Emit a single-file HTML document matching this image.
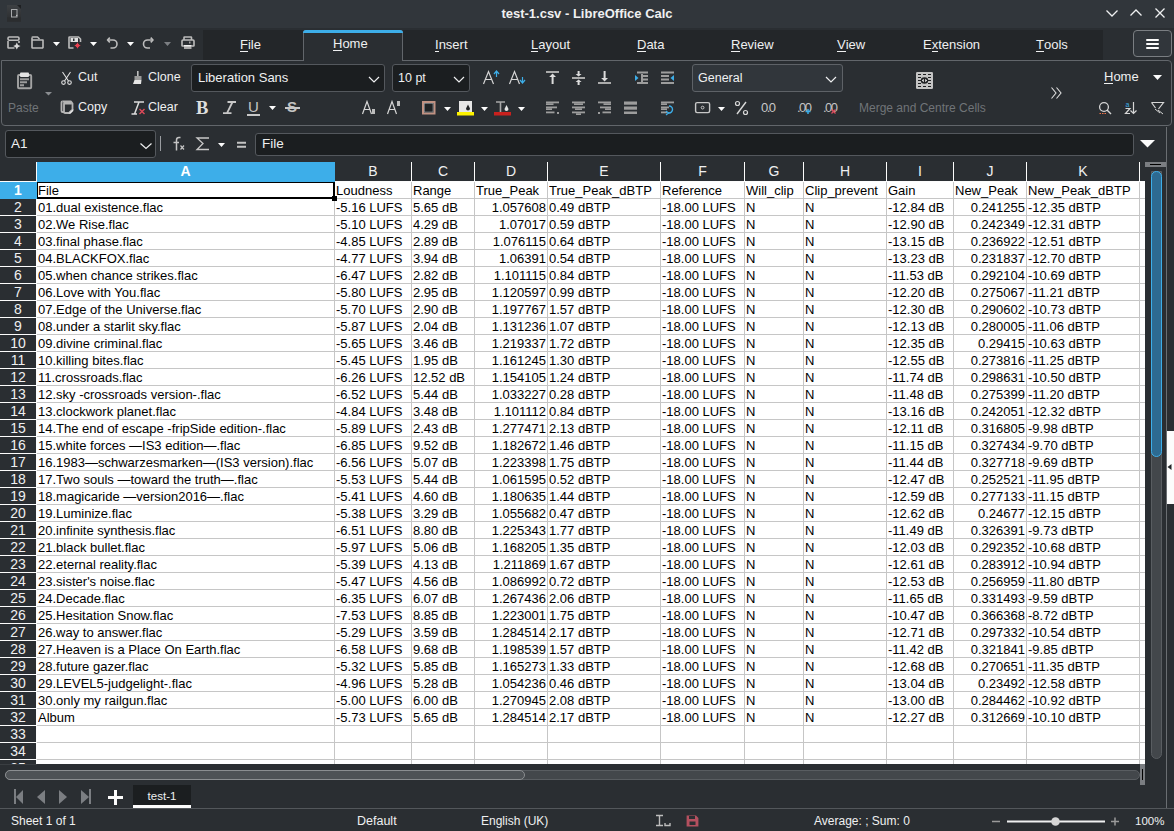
<!DOCTYPE html>
<html><head><meta charset="utf-8">
<style>
*{margin:0;padding:0;box-sizing:border-box}
html,body{width:1174px;height:831px;overflow:hidden;background:#2a2e32;font-family:"Liberation Sans",sans-serif;color:#eff0f1}
.abs{position:absolute}
svg{position:absolute;overflow:visible}
.t{position:absolute;white-space:nowrap;font-size:13px;line-height:16px}
.u{border-bottom:1px solid currentColor;display:inline-block;line-height:13px}
#title{left:0;top:0;width:1174px;height:28px;background:#31363b}
#tbrow{left:0;top:28px;width:1174px;height:33px;background:#2a2e32}
#tabsbg{left:203px;top:30px;width:900px;height:30px;background:#232629}
.tab{position:absolute;top:37px;font-size:13px;line-height:16px;color:#eff0f1;white-space:nowrap}
#panel{left:1px;top:60px;width:1171px;height:66px;border:1px solid #62666b;border-radius:0 4px 4px 4px;background:#2a2e32}
.combo{position:absolute;background:#1b1e20;border:1px solid #54585d;border-radius:3px}
.cells{position:absolute;background:#fff}
.ch{position:absolute;top:162px;height:19px;text-align:center;font-size:14px;line-height:19px}
.rh{position:absolute;left:0;width:36px;height:17px;text-align:center;font-size:14px;line-height:17px}
.hl{position:absolute;height:1px;background:#c6c6c6}
.vl{position:absolute;width:1px;background:#c6c6c6}
.c{position:absolute;height:16px;font-size:13px;line-height:17px;color:#000;white-space:nowrap;overflow:hidden}
.c.r{text-align:right}
</style></head><body>
<div id="title" class="abs"></div>
<!-- app icon -->
<svg style="left:0;top:0" width="30" height="28">
<defs><linearGradient id="ag" x1="0" y1="0" x2="0" y2="1"><stop offset="0" stop-color="#3d4043"/><stop offset="1" stop-color="#2a2c2e"/></linearGradient></defs>
<path d="M7 5 H21 V21.5 H7 Z" fill="url(#ag)"/>
<path d="M17 5 H21 V9 Z" fill="#1e2022"/>
<rect x="7" y="17.5" width="14" height="4" fill="#2b2d2f"/>
<rect x="11.5" y="9.5" width="5.5" height="7.5" fill="none" stroke="#a8aaac" stroke-width="1"/>
<path d="M15.5 16.5 L17 14.5 L17.5 15.5 Z" fill="#e0e0e0"/>
</svg>
<div class="t" style="left:0;top:6px;width:1174px;text-align:center;font-weight:bold;font-size:13px">test-1.csv - LibreOffice Calc</div>
<svg style="left:0;top:0" width="1174" height="28">
<path d="M1106.5 10.5 L1112 16 L1117.5 10.5" fill="none" stroke="#eff0f1" stroke-width="1.3"/>
<path d="M1130.5 15.5 L1136 10 L1141.5 15.5" fill="none" stroke="#eff0f1" stroke-width="1.3"/>
<path d="M1155.5 8.5 L1164.5 17.5 M1164.5 8.5 L1155.5 17.5" fill="none" stroke="#eff0f1" stroke-width="1.3"/>
</svg>
<div id="tbrow" class="abs"></div>
<div id="tabsbg" class="abs"></div>
<!-- quick toolbar icons -->
<svg style="left:0;top:0" width="210" height="60">
<g fill="none" stroke="#bcbcbc" stroke-width="1.6" stroke-linejoin="round">
<path d="M8 41 V47.5 A1 1 0 0 0 9 48 H14.5 M19 41 V43"/>
<rect x="8" y="37" width="11" height="3.2" rx="1.2"/>
<path d="M32 37.5 V47.5 A1 1 0 0 0 33 48 H42.5 A1 1 0 0 0 43 47.5 V40 H32"/>
<path d="M32 37.5 A1 1 0 0 1 33 37 H37.5 L39.5 39"/>
<path d="M69 37.5 A0.5 0.5 0 0 1 69.5 37 H78.5 L80.5 39 V42 M69 37.5 V48 H73.5"/>
<path d="M108 40 H113 A3.8 3.8 0 0 1 113 48 H110.5"/>
<path d="M109.8 37.6 L107.5 40 L109.8 42.4"/>
<path d="M152.5 40 H147.5 A3.8 3.8 0 0 0 147.5 48 H150"/>
<path d="M150.7 37.6 L153 40 L150.7 42.4"/>
<path d="M184 40 V37.5 A0.5 0.5 0 0 1 184.5 37 H191 A0.5 0.5 0 0 1 191.5 37.5 V40"/>
<path d="M184 46 H182.5 A0.5 0.5 0 0 1 182 45.5 V41 A1 1 0 0 1 183 40 H193 A1 1 0 0 1 194 41 V45.5 A0.5 0.5 0 0 1 193.5 46 H191.5"/>
</g>
<path d="M16.8 42.5 L18 45 L20.5 46 L18 47.2 L16.8 49.5 L15.6 47.2 L13.2 46 L15.6 45 Z" fill="#d8d8d8"/>
<rect x="70.5" y="38" width="7.5" height="4" fill="#e0e0e0"/>
<rect x="73" y="38.5" width="1.5" height="2.5" fill="#2a2e32"/>
<path d="M77.5 42.3 L78.6 44.4 L80.7 45.5 L78.6 46.6 L77.5 48.7 L76.4 46.6 L74.3 45.5 L76.4 44.4 Z" fill="#e8404f"/>
<circle cx="77.5" cy="45.5" r="1.8" fill="#e8404f"/>
<rect x="184" y="45" width="7.5" height="4" fill="#a8a8a8"/>
<rect x="184" y="45" width="7.5" height="1.5" fill="#eeeeee"/>
<rect x="189" y="41.5" width="1.5" height="2" fill="#a0a0a0"/>
<path d="M53 42 H60 L56.5 46 Z M90 42 H97 L93.5 46 Z M127 42 H134 L130.5 46 Z" fill="#fcfcfc"/>
<path d="M164 42 H171 L167.5 46 Z" fill="#7c7f83"/>
</svg>
<div id="panel" class="abs"></div>
<!-- Home tab -->
<div class="abs" style="left:303px;top:30px;width:100px;height:31px;background:#2a2e32;border:1px solid #62666b;border-bottom:none;border-radius:3px 3px 0 0"></div>
<div class="abs" style="left:303px;top:30px;width:100px;height:3px;background:#3daee9;border-radius:3px 3px 0 0"></div>
<div class="tab" style="left:240px"><span class="u">F</span>ile</div>
<div class="tab" style="left:333px;top:36px"><span class="u">H</span>ome</div>
<div class="tab" style="left:435px"><span class="u">I</span>nsert</div>
<div class="tab" style="left:531px"><span class="u">L</span>ayout</div>
<div class="tab" style="left:637px"><span class="u">D</span>ata</div>
<div class="tab" style="left:731px"><span class="u">R</span>eview</div>
<div class="tab" style="left:837px"><span class="u">V</span>iew</div>
<div class="tab" style="left:923px">E<span class="u">x</span>tension</div>
<div class="tab" style="left:1036px"><span class="u">T</span>ools</div>
<div class="abs" style="left:1133px;top:30px;width:39px;height:27px;background:#31363b;border:1px solid #7a7e82;border-radius:4px"></div>
<div class="abs" style="left:1146px;top:39px;width:13px;height:2px;background:#fcfcfc;border-radius:1px"></div>
<div class="abs" style="left:1146px;top:43px;width:13px;height:2px;background:#fcfcfc;border-radius:1px"></div>
<div class="abs" style="left:1146px;top:47px;width:13px;height:2px;background:#fcfcfc;border-radius:1px"></div>
<!-- Paste / Cut / Copy / Clone / Clear -->
<svg style="left:0;top:0" width="1174" height="126">
<rect x="18" y="75" width="13.2" height="13.2" rx="1" fill="none" stroke="#a4a4a4" stroke-width="1.9"/>
<path d="M20 79.3 H29 M20 82.3 H27 M20 85.3 H24" stroke="#9c9c9c" stroke-width="2"/>
<rect x="20" y="72.5" width="9" height="4.6" rx="1" fill="#e4e4e4"/>
<path d="M45 92 H52 L48.5 95.5 Z" fill="#8a8d91"/>
<!-- scissors -->
<g fill="none" stroke="#e0e0e0" stroke-width="1.1">
<path d="M62.5 72 L68.5 81 M70.5 72 L64.5 81"/>
<circle cx="63.5" cy="82.6" r="1.8"/><circle cx="69.5" cy="82.6" r="1.8"/>
</g>
<!-- copy -->
<g fill="none" stroke="#b4b4b4" stroke-width="1.8" stroke-linejoin="round">
<path d="M62.5 101.5 H71 L72.5 103.5 V109.5 L69 113 H65 A1 1 0 0 1 64 112 V103.5 H71.5"/>
<path d="M62.5 101.5 A1 1 0 0 0 61.5 102.5 V111 A1 1 0 0 0 62.5 112 H64"/>
</g>
<path d="M68.5 113.6 L73.3 109 V111 L70.5 113.8 Z" fill="#e8e8e8"/>
<!-- clone brush -->
<rect x="137" y="71" width="1.6" height="5" fill="#bdbdbd"/>
<path d="M134.5 76 H141.5 V80 H134.5 Z" fill="#9a9a9a"/>
<path d="M134.5 80 H141.5 L141 84 H133 Z" fill="#e6e6e6"/>
<!-- clear formatting -->
<path d="M134 102 H144 M139 102 L134.5 114 M131.5 114 H137" fill="none" stroke="#dcdcdc" stroke-width="1.5"/>
<path d="M139.5 109 L144.5 114 M144.5 109 L139.5 114" stroke="#e04a5a" stroke-width="1.4"/>
</svg>
<div class="t" style="left:78px;top:69px;font-size:12.5px">Cut</div>
<div class="t" style="left:78px;top:99px;font-size:12.5px">Copy</div>
<div class="t" style="left:148px;top:69px;font-size:12.5px">Clone</div>
<div class="t" style="left:148px;top:99px;font-size:12.5px">Clear</div>
<div class="t" style="left:8px;top:100px;font-size:12px;color:#707478">Paste</div>
<!-- font name combo -->
<div class="combo" style="left:191px;top:64px;width:194px;height:28px"></div>
<div class="t" style="left:198px;top:70px;font-size:13px">Liberation Sans</div>
<div class="combo" style="left:392px;top:64px;width:78px;height:28px"></div>
<div class="t" style="left:398px;top:70px;font-size:12.5px">10 pt</div>
<div class="combo" style="left:692px;top:64px;width:151px;height:28px;background:#31363b;border-color:#5e6267"></div>
<div class="t" style="left:698px;top:70px;font-size:12.5px">General</div>
<svg style="left:0;top:0" width="1174" height="126">
<g fill="none" stroke="#eff0f1" stroke-width="1.2">
<path d="M369 77 L374 82 L379 77"/>
<path d="M454 77 L459 82 L464 77"/>
<path d="M826 77 L831 82 L836 77"/>
</g>
</svg>
<!-- B I U S -->
<div class="t" style="left:196px;top:98px;font-size:18.5px;font-weight:bold;font-family:'Liberation Serif',serif;color:#dedede;line-height:20px">B</div>
<svg style="left:0;top:0" width="260" height="126"><path d="M227.5 102 H236 M223 113.2 H231.5 M232.5 102 L227 113.2" fill="none" stroke="#c8c8c8" stroke-width="1.8"/></svg>
<div class="t" style="left:248px;top:98px;font-size:15px;color:#c4c4c4;line-height:18px">U</div>
<div class="abs" style="left:247px;top:114px;width:13px;height:1.5px;background:#c8c8c8"></div>
<div class="t" style="left:287px;top:98px;font-size:15px;color:#c4c4c4;line-height:18px;font-weight:bold">S</div>
<div class="abs" style="left:285px;top:107px;width:15px;height:1.5px;background:#c8c8c8"></div>
<svg style="left:0;top:0" width="1174" height="126">
<path d="M269 106 H276 L272.5 110 Z M444 107 H451 L447.5 111 Z M481 107 H488 L484.5 111 Z M518 107 H525 L521.5 111 Z M718 107 H725 L721.5 111 Z" fill="#fcfcfc"/>
<!-- sub/superscript -->
<g fill="none" stroke="#d6d6d6" stroke-width="1.2">
<path d="M362.5 114 L367 101.5 L371.5 114 M364 109.5 H370"/>
<path d="M387.5 114 L392 101.5 L396.5 114 M389 109.5 H395"/>
<!-- grow/shrink -->
<path d="M483.5 84 L488.5 71.5 L493.5 84 M485.5 79.5 H491.5"/>
<path d="M509.5 84 L514.5 71.5 L519.5 84 M511.5 79.5 H517.5"/>
</g>
<rect x="372" y="109" width="3" height="5" fill="#bdbdbd"/>
<rect x="397" y="101" width="3" height="5" fill="#bdbdbd"/>
<path d="M494 74 L496.5 71 L499 74 M496.5 72 V77" fill="none" stroke="#3daee9" stroke-width="1.2"/>
<path d="M520 80 L522.5 83 L525 80 M522.5 83 V77" fill="none" stroke="#3daee9" stroke-width="1.2"/>
<!-- borders -->
<rect x="423" y="102" width="11.5" height="11.5" fill="#1f2224" stroke="#c09283" stroke-width="2"/>
<rect x="424.5" y="103.5" width="8.5" height="8.5" fill="none" stroke="#9aa4aa" stroke-width="0.6"/>
<!-- highlight -->
<rect x="459" y="101" width="13" height="11" fill="#e6e6e6"/>
<path d="M468 104.5 L470 108.5 A2 2 0 0 1 466 108.5 Z" fill="#1f2224"/>
<rect x="457" y="112" width="17" height="3.5" fill="#fdf200"/>
<!-- font color -->
<path d="M496 102 H505 M500.5 102 V112" fill="none" stroke="#a8a8a8" stroke-width="1.6"/>
<path d="M506.5 105 L508.5 109 A2 2 0 0 1 504.5 109 Z" fill="#e6e6e6"/>
<rect x="494" y="112" width="17" height="3.5" fill="#c9211e"/>
<!-- align top/center/bottom -->
<g fill="#dcdcdc">
<rect x="546" y="71" width="13" height="2" fill="#ababab"/>
<rect x="551.6" y="76" width="2" height="8"/>
<path d="M549.2 77 L552.6 73.6 L556 77 Z"/>
<rect x="572" y="77" width="13" height="2" fill="#ababab"/>
<rect x="577.6" y="71" width="2" height="4"/>
<rect x="577.6" y="81" width="2" height="4"/>
<path d="M575.6 74 L578.6 76.6 L581.6 74 Z M575.6 82 L578.6 79.4 L581.6 82 Z"/>
<rect x="598" y="82" width="13" height="2" fill="#ababab"/>
<rect x="603.6" y="71" width="2" height="7.5"/>
<path d="M601.2 78 L604.6 81.4 L608 78 Z"/>
</g>
<!-- indent -->
<g fill="#9d9d9d">
<rect x="637" y="71.5" width="11" height="2"/><rect x="641" y="75" width="7" height="2"/><rect x="641" y="78.5" width="7" height="2"/><rect x="637" y="82" width="11" height="2"/>
<rect x="641" y="74" width="2" height="8"/>
<rect x="661" y="71.5" width="13" height="2"/><rect x="661" y="75" width="8" height="2"/><rect x="661" y="78.5" width="8" height="2"/><rect x="661" y="82" width="13" height="2"/>
</g>
<path d="M635 75 L638.5 78 L635 81 Z" fill="#3daee9"/>
<path d="M674 75 L670.5 78 L674 81 Z" fill="#3daee9"/>
<!-- align left/center/right/justify, wrap -->
<g fill="#9d9d9d">
<rect x="546" y="101.5" width="13" height="1.8"/><rect x="546" y="103.3" width="7.5" height="1.7"/><rect x="546" y="106.5" width="11" height="1.8"/><rect x="546" y="108.3" width="6" height="1.7"/><rect x="546" y="111.5" width="8.5" height="1.8"/><rect x="557" y="112" width="2" height="2"/>
<rect x="572" y="101.5" width="13" height="1.8"/><rect x="574" y="103.3" width="9" height="1.7"/><rect x="572" y="106.5" width="13" height="1.8"/><rect x="575" y="108.3" width="7" height="1.7"/><rect x="572" y="111.5" width="13" height="1.8"/><rect x="576" y="113.3" width="5" height="1.7"/>
<rect x="598" y="101.5" width="13" height="1.8"/><rect x="603.5" y="103.3" width="7.5" height="1.7"/><rect x="600" y="106.5" width="11" height="1.8"/><rect x="605" y="108.3" width="6" height="1.7"/><rect x="602.5" y="111.5" width="8.5" height="1.8"/><rect x="598" y="112" width="2" height="2"/>
<rect x="624" y="101.5" width="13" height="3.2"/><rect x="624" y="106.5" width="13" height="3.2"/><rect x="624" y="111.5" width="13" height="2.5"/>
<rect x="661" y="101.5" width="13" height="1.8"/><rect x="661" y="103.3" width="6" height="1.7"/><rect x="661" y="106.5" width="8" height="1.8"/><rect x="661" y="108.3" width="6" height="1.7"/><rect x="661" y="111.5" width="6" height="1.8"/>
</g>
<path d="M669 106 A3.5 3.5 0 0 1 669 113 H668" fill="none" stroke="#3daee9" stroke-width="1.4"/>
<path d="M666 111 L668.5 113 L666 115" fill="none" stroke="#3daee9" stroke-width="1.2"/>
<!-- currency -->
<rect x="695.6" y="102.6" width="14" height="10" rx="1.5" fill="none" stroke="#c8c8c8" stroke-width="1.4"/>
<circle cx="702.6" cy="107.6" r="1.4" fill="none" stroke="#c8c8c8" stroke-width="1"/>
<!-- percent -->
<path d="M746 102 L737 114" stroke="#d8d8d8" stroke-width="1.4"/>
<circle cx="737.5" cy="103.5" r="2" fill="none" stroke="#d8d8d8" stroke-width="1.2"/>
<circle cx="745.5" cy="112.5" r="2" fill="none" stroke="#d8d8d8" stroke-width="1.2"/>
<!-- merge -->
<rect x="916" y="72" width="17" height="17" rx="1.2" fill="#c4c4c4"/>
<path d="M918 74.5 H921 M923 74.5 H926 M928 74.5 H931 M918 77.5 H921 M928 77.5 H931 M918 80.5 H921 M928 80.5 H931 M918 83.5 H921 M928 83.5 H931 M918 86.5 H921 M923 86.5 H926 M928 86.5 H931" stroke="#1e2022" stroke-width="1.1"/>
<ellipse cx="924.5" cy="80.5" rx="3.7" ry="3.3" fill="#1e2022"/>
<path d="M921.8 80.5 L923.8 78.8 V82.2 Z M927.2 80.5 L925.2 78.8 V82.2 Z" fill="#e8e8e8"/>
<!-- >> -->
<path d="M1051.5 87.5 L1056 93 L1051.5 98.5 M1056.5 87.5 L1061 93 L1056.5 98.5" fill="none" stroke="#e0e0e0" stroke-width="1.1"/>
<path d="M1153 75 H1162 L1157.5 80 Z" fill="#fcfcfc"/>
<!-- find -->
<circle cx="1104" cy="107" r="4.4" fill="none" stroke="#d6d6d6" stroke-width="1.3"/>
<path d="M1107 110 L1111 114" stroke="#d6d6d6" stroke-width="1.4"/>
<path d="M1099.5 113.5 H1107" stroke="#f0744a" stroke-width="1.2" stroke-dasharray="1.5 1"/>
<!-- sort -->
<path d="M1133.5 102 V113.5 M1130.5 110.5 L1133.5 113.5 L1136.5 110.5" fill="none" stroke="#d6d6d6" stroke-width="1.2"/>
<path d="M1125.5 108.5 H1130 L1125.5 113.5 H1130" fill="none" stroke="#d6d6d6" stroke-width="1.2"/>
<text x="1125.5" y="107" font-size="7" fill="#3daee9" font-family="Liberation Sans">a</text>
<!-- filter -->
<path d="M1151.5 102.5 H1163.5 L1158.5 109 M1151.5 102.5 L1155.5 108" fill="none" stroke="#d6d6d6" stroke-width="1.2"/>
<path d="M1155 109 L1160 113 M1158 110 L1163 114" stroke="#d6d6d6" stroke-width="1"/>
</svg>
<div class="t" style="left:761px;top:100px;font-size:13px;color:#c8c8c8;letter-spacing:-1.5px">0.0</div>
<div class="t" style="left:797px;top:100px;font-size:13px;color:#c4c4c4;letter-spacing:-1.5px">.00</div>
<div class="t" style="left:823px;top:100px;font-size:13px;color:#c4c4c4;letter-spacing:-1.5px">.00</div>
<svg style="left:0;top:0" width="1174" height="126">
<path d="M808 109 V114 M805.5 111.5 H810.5" stroke="#3daee9" stroke-width="1.5"/>
<path d="M831.5 109.5 L835.5 113.5 M835.5 109.5 L831.5 113.5" stroke="#e04a5a" stroke-width="1.2"/>
</svg>
<div class="t" style="left:859px;top:100px;font-size:12px;color:#707478">Merge and Centre Cells</div>
<div class="t" style="left:1104px;top:69px;font-size:13px"><span class="u">H</span>ome</div>

<!-- formula bar -->
<div class="combo" style="left:5px;top:130px;width:151px;height:28px"></div>
<div class="t" style="left:11px;top:136px;font-size:13.5px">A1</div>
<svg style="left:0;top:0" width="260" height="160">
<path d="M140.5 143.5 L146 148.5 L151.5 143.5" fill="none" stroke="#eff0f1" stroke-width="1.2"/>
<line x1="160.5" y1="136" x2="160.5" y2="151" stroke="#9a9da1" stroke-width="1"/>
<path d="M218 143 H225 L221.5 147 Z" fill="#fcfcfc"/>
<path d="M237 142.8 H246 M237 146.8 H246" stroke="#c4c4c4" stroke-width="2"/>
<path d="M209 138 H197 L203 143.5 L197 149.5 H209" fill="none" stroke="#c8c8c8" stroke-width="1.3"/>
</svg>
<svg style="left:0;top:0" width="260" height="160">
<path d="M176.5 150.5 V140 A2.5 2.5 0 0 1 179 137.5 H180.5 M173.5 142.5 H179" fill="none" stroke="#c4c4c4" stroke-width="1.5"/>
<path d="M180.5 145.5 L184 149.5 M184 145.5 L180.5 149.5" stroke="#c4c4c4" stroke-width="1.2"/>
</svg>
<div class="combo" style="left:255px;top:133px;width:879px;height:23px"></div>
<div class="t" style="left:262px;top:136px;font-size:13.5px">File</div>
<svg style="left:0;top:0" width="1174" height="160"><path d="M1140 140 H1155 L1147.5 147.5 Z" fill="#fcfcfc"/></svg>
<div class="abs" style="left:1166px;top:127px;width:1px;height:700px;background:#5e6267"></div>
<div class="cells" style="left:37px;top:182px;width:1108px;height:582px"></div>
<div class="abs" style="left:0;top:162px;width:1145px;height:20px;background:#2a2e32"></div>
<div class="abs" style="left:0;top:182px;width:36px;height:582px;background:#2a2e32"></div>
<div class="abs" style="left:0;top:181px;width:1145px;height:1px;background:#fcfcfc"></div>
<div class="abs" style="left:36px;top:162px;width:1px;height:602px;background:#fcfcfc"></div>
<div class="abs" style="left:334px;top:162px;width:1px;height:19px;background:#fcfcfc"></div>
<div class="abs" style="left:411px;top:162px;width:1px;height:19px;background:#fcfcfc"></div>
<div class="abs" style="left:474px;top:162px;width:1px;height:19px;background:#fcfcfc"></div>
<div class="abs" style="left:547px;top:162px;width:1px;height:19px;background:#fcfcfc"></div>
<div class="abs" style="left:660px;top:162px;width:1px;height:19px;background:#fcfcfc"></div>
<div class="abs" style="left:744px;top:162px;width:1px;height:19px;background:#fcfcfc"></div>
<div class="abs" style="left:803px;top:162px;width:1px;height:19px;background:#fcfcfc"></div>
<div class="abs" style="left:886px;top:162px;width:1px;height:19px;background:#fcfcfc"></div>
<div class="abs" style="left:953px;top:162px;width:1px;height:19px;background:#fcfcfc"></div>
<div class="abs" style="left:1026px;top:162px;width:1px;height:19px;background:#fcfcfc"></div>
<div class="abs" style="left:1139px;top:162px;width:1px;height:19px;background:#fcfcfc"></div>
<div class="abs" style="left:0;top:198px;width:36px;height:1px;background:#fcfcfc"></div>
<div class="abs" style="left:0;top:215px;width:36px;height:1px;background:#fcfcfc"></div>
<div class="abs" style="left:0;top:232px;width:36px;height:1px;background:#fcfcfc"></div>
<div class="abs" style="left:0;top:249px;width:36px;height:1px;background:#fcfcfc"></div>
<div class="abs" style="left:0;top:266px;width:36px;height:1px;background:#fcfcfc"></div>
<div class="abs" style="left:0;top:283px;width:36px;height:1px;background:#fcfcfc"></div>
<div class="abs" style="left:0;top:300px;width:36px;height:1px;background:#fcfcfc"></div>
<div class="abs" style="left:0;top:317px;width:36px;height:1px;background:#fcfcfc"></div>
<div class="abs" style="left:0;top:334px;width:36px;height:1px;background:#fcfcfc"></div>
<div class="abs" style="left:0;top:351px;width:36px;height:1px;background:#fcfcfc"></div>
<div class="abs" style="left:0;top:368px;width:36px;height:1px;background:#fcfcfc"></div>
<div class="abs" style="left:0;top:385px;width:36px;height:1px;background:#fcfcfc"></div>
<div class="abs" style="left:0;top:402px;width:36px;height:1px;background:#fcfcfc"></div>
<div class="abs" style="left:0;top:419px;width:36px;height:1px;background:#fcfcfc"></div>
<div class="abs" style="left:0;top:436px;width:36px;height:1px;background:#fcfcfc"></div>
<div class="abs" style="left:0;top:453px;width:36px;height:1px;background:#fcfcfc"></div>
<div class="abs" style="left:0;top:470px;width:36px;height:1px;background:#fcfcfc"></div>
<div class="abs" style="left:0;top:487px;width:36px;height:1px;background:#fcfcfc"></div>
<div class="abs" style="left:0;top:504px;width:36px;height:1px;background:#fcfcfc"></div>
<div class="abs" style="left:0;top:521px;width:36px;height:1px;background:#fcfcfc"></div>
<div class="abs" style="left:0;top:538px;width:36px;height:1px;background:#fcfcfc"></div>
<div class="abs" style="left:0;top:555px;width:36px;height:1px;background:#fcfcfc"></div>
<div class="abs" style="left:0;top:572px;width:36px;height:1px;background:#fcfcfc"></div>
<div class="abs" style="left:0;top:589px;width:36px;height:1px;background:#fcfcfc"></div>
<div class="abs" style="left:0;top:606px;width:36px;height:1px;background:#fcfcfc"></div>
<div class="abs" style="left:0;top:623px;width:36px;height:1px;background:#fcfcfc"></div>
<div class="abs" style="left:0;top:640px;width:36px;height:1px;background:#fcfcfc"></div>
<div class="abs" style="left:0;top:657px;width:36px;height:1px;background:#fcfcfc"></div>
<div class="abs" style="left:0;top:674px;width:36px;height:1px;background:#fcfcfc"></div>
<div class="abs" style="left:0;top:691px;width:36px;height:1px;background:#fcfcfc"></div>
<div class="abs" style="left:0;top:708px;width:36px;height:1px;background:#fcfcfc"></div>
<div class="abs" style="left:0;top:725px;width:36px;height:1px;background:#fcfcfc"></div>
<div class="abs" style="left:0;top:742px;width:36px;height:1px;background:#fcfcfc"></div>
<div class="abs" style="left:0;top:759px;width:36px;height:1px;background:#fcfcfc"></div>
<div class="abs" style="left:37px;top:162px;width:298px;height:20px;background:#3daee9"></div>
<div class="abs" style="left:0;top:182px;width:37px;height:17px;background:#3daee9"></div>
<div class="ch" style="left:37px;width:297px;color:#fff;font-weight:bold">A</div>
<div class="ch" style="left:335px;width:76px;color:#eff0f1;font-weight:normal">B</div>
<div class="ch" style="left:412px;width:62px;color:#eff0f1;font-weight:normal">C</div>
<div class="ch" style="left:475px;width:72px;color:#eff0f1;font-weight:normal">D</div>
<div class="ch" style="left:548px;width:112px;color:#eff0f1;font-weight:normal">E</div>
<div class="ch" style="left:661px;width:83px;color:#eff0f1;font-weight:normal">F</div>
<div class="ch" style="left:745px;width:58px;color:#eff0f1;font-weight:normal">G</div>
<div class="ch" style="left:804px;width:82px;color:#eff0f1;font-weight:normal">H</div>
<div class="ch" style="left:887px;width:66px;color:#eff0f1;font-weight:normal">I</div>
<div class="ch" style="left:954px;width:72px;color:#eff0f1;font-weight:normal">J</div>
<div class="ch" style="left:1027px;width:112px;color:#eff0f1;font-weight:normal">K</div>
<div class="rh" style="top:182px;color:#fff;font-weight:bold">1</div>
<div class="rh" style="top:199px;color:#eff0f1;font-weight:normal">2</div>
<div class="rh" style="top:216px;color:#eff0f1;font-weight:normal">3</div>
<div class="rh" style="top:233px;color:#eff0f1;font-weight:normal">4</div>
<div class="rh" style="top:250px;color:#eff0f1;font-weight:normal">5</div>
<div class="rh" style="top:267px;color:#eff0f1;font-weight:normal">6</div>
<div class="rh" style="top:284px;color:#eff0f1;font-weight:normal">7</div>
<div class="rh" style="top:301px;color:#eff0f1;font-weight:normal">8</div>
<div class="rh" style="top:318px;color:#eff0f1;font-weight:normal">9</div>
<div class="rh" style="top:335px;color:#eff0f1;font-weight:normal">10</div>
<div class="rh" style="top:352px;color:#eff0f1;font-weight:normal">11</div>
<div class="rh" style="top:369px;color:#eff0f1;font-weight:normal">12</div>
<div class="rh" style="top:386px;color:#eff0f1;font-weight:normal">13</div>
<div class="rh" style="top:403px;color:#eff0f1;font-weight:normal">14</div>
<div class="rh" style="top:420px;color:#eff0f1;font-weight:normal">15</div>
<div class="rh" style="top:437px;color:#eff0f1;font-weight:normal">16</div>
<div class="rh" style="top:454px;color:#eff0f1;font-weight:normal">17</div>
<div class="rh" style="top:471px;color:#eff0f1;font-weight:normal">18</div>
<div class="rh" style="top:488px;color:#eff0f1;font-weight:normal">19</div>
<div class="rh" style="top:505px;color:#eff0f1;font-weight:normal">20</div>
<div class="rh" style="top:522px;color:#eff0f1;font-weight:normal">21</div>
<div class="rh" style="top:539px;color:#eff0f1;font-weight:normal">22</div>
<div class="rh" style="top:556px;color:#eff0f1;font-weight:normal">23</div>
<div class="rh" style="top:573px;color:#eff0f1;font-weight:normal">24</div>
<div class="rh" style="top:590px;color:#eff0f1;font-weight:normal">25</div>
<div class="rh" style="top:607px;color:#eff0f1;font-weight:normal">26</div>
<div class="rh" style="top:624px;color:#eff0f1;font-weight:normal">27</div>
<div class="rh" style="top:641px;color:#eff0f1;font-weight:normal">28</div>
<div class="rh" style="top:658px;color:#eff0f1;font-weight:normal">29</div>
<div class="rh" style="top:675px;color:#eff0f1;font-weight:normal">30</div>
<div class="rh" style="top:692px;color:#eff0f1;font-weight:normal">31</div>
<div class="rh" style="top:709px;color:#eff0f1;font-weight:normal">32</div>
<div class="rh" style="top:726px;color:#eff0f1;font-weight:normal">33</div>
<div class="rh" style="top:743px;color:#eff0f1;font-weight:normal">34</div>
<div class="rh" style="top:760px;color:#eff0f1;font-weight:normal">35</div>
<div class="hl" style="top:198px;left:37px;width:1108px"></div>
<div class="hl" style="top:215px;left:37px;width:1108px"></div>
<div class="hl" style="top:232px;left:37px;width:1108px"></div>
<div class="hl" style="top:249px;left:37px;width:1108px"></div>
<div class="hl" style="top:266px;left:37px;width:1108px"></div>
<div class="hl" style="top:283px;left:37px;width:1108px"></div>
<div class="hl" style="top:300px;left:37px;width:1108px"></div>
<div class="hl" style="top:317px;left:37px;width:1108px"></div>
<div class="hl" style="top:334px;left:37px;width:1108px"></div>
<div class="hl" style="top:351px;left:37px;width:1108px"></div>
<div class="hl" style="top:368px;left:37px;width:1108px"></div>
<div class="hl" style="top:385px;left:37px;width:1108px"></div>
<div class="hl" style="top:402px;left:37px;width:1108px"></div>
<div class="hl" style="top:419px;left:37px;width:1108px"></div>
<div class="hl" style="top:436px;left:37px;width:1108px"></div>
<div class="hl" style="top:453px;left:37px;width:1108px"></div>
<div class="hl" style="top:470px;left:37px;width:1108px"></div>
<div class="hl" style="top:487px;left:37px;width:1108px"></div>
<div class="hl" style="top:504px;left:37px;width:1108px"></div>
<div class="hl" style="top:521px;left:37px;width:1108px"></div>
<div class="hl" style="top:538px;left:37px;width:1108px"></div>
<div class="hl" style="top:555px;left:37px;width:1108px"></div>
<div class="hl" style="top:572px;left:37px;width:1108px"></div>
<div class="hl" style="top:589px;left:37px;width:1108px"></div>
<div class="hl" style="top:606px;left:37px;width:1108px"></div>
<div class="hl" style="top:623px;left:37px;width:1108px"></div>
<div class="hl" style="top:640px;left:37px;width:1108px"></div>
<div class="hl" style="top:657px;left:37px;width:1108px"></div>
<div class="hl" style="top:674px;left:37px;width:1108px"></div>
<div class="hl" style="top:691px;left:37px;width:1108px"></div>
<div class="hl" style="top:708px;left:37px;width:1108px"></div>
<div class="hl" style="top:725px;left:37px;width:1108px"></div>
<div class="hl" style="top:742px;left:37px;width:1108px"></div>
<div class="hl" style="top:759px;left:37px;width:1108px"></div>
<div class="vl" style="left:334px;top:182px;height:582px"></div>
<div class="vl" style="left:411px;top:182px;height:582px"></div>
<div class="vl" style="left:474px;top:182px;height:582px"></div>
<div class="vl" style="left:547px;top:182px;height:582px"></div>
<div class="vl" style="left:660px;top:182px;height:582px"></div>
<div class="vl" style="left:744px;top:182px;height:582px"></div>
<div class="vl" style="left:803px;top:182px;height:582px"></div>
<div class="vl" style="left:886px;top:182px;height:582px"></div>
<div class="vl" style="left:953px;top:182px;height:582px"></div>
<div class="vl" style="left:1026px;top:182px;height:582px"></div>
<div class="vl" style="left:1139px;top:182px;height:582px"></div>
<div class="c" style="top:182px;left:38px;width:296px">File</div>
<div class="c" style="top:182px;left:336px;width:75px">Loudness</div>
<div class="c" style="top:182px;left:413px;width:61px">Range</div>
<div class="c" style="top:182px;left:476px;width:71px">True_Peak</div>
<div class="c" style="top:182px;left:549px;width:111px">True_Peak_dBTP</div>
<div class="c" style="top:182px;left:662px;width:82px">Reference</div>
<div class="c" style="top:182px;left:746px;width:57px">Will_clip</div>
<div class="c" style="top:182px;left:805px;width:81px">Clip_prevent</div>
<div class="c" style="top:182px;left:888px;width:65px">Gain</div>
<div class="c" style="top:182px;left:955px;width:71px">New_Peak</div>
<div class="c" style="top:182px;left:1028px;width:111px">New_Peak_dBTP</div>
<div class="c" style="top:199px;left:38px;width:296px">01.dual existence.flac</div>
<div class="c" style="top:199px;left:336px;width:75px">-5.16 LUFS</div>
<div class="c" style="top:199px;left:413px;width:61px">5.65 dB</div>
<div class="c r" style="top:199px;left:475px;width:71px">1.057608</div>
<div class="c" style="top:199px;left:549px;width:111px">0.49 dBTP</div>
<div class="c" style="top:199px;left:662px;width:82px">-18.00 LUFS</div>
<div class="c" style="top:199px;left:746px;width:57px">N</div>
<div class="c" style="top:199px;left:805px;width:81px">N</div>
<div class="c" style="top:199px;left:888px;width:65px">-12.84 dB</div>
<div class="c r" style="top:199px;left:954px;width:71px">0.241255</div>
<div class="c" style="top:199px;left:1028px;width:111px">-12.35 dBTP</div>
<div class="c" style="top:216px;left:38px;width:296px">02.We Rise.flac</div>
<div class="c" style="top:216px;left:336px;width:75px">-5.10 LUFS</div>
<div class="c" style="top:216px;left:413px;width:61px">4.29 dB</div>
<div class="c r" style="top:216px;left:475px;width:71px">1.07017</div>
<div class="c" style="top:216px;left:549px;width:111px">0.59 dBTP</div>
<div class="c" style="top:216px;left:662px;width:82px">-18.00 LUFS</div>
<div class="c" style="top:216px;left:746px;width:57px">N</div>
<div class="c" style="top:216px;left:805px;width:81px">N</div>
<div class="c" style="top:216px;left:888px;width:65px">-12.90 dB</div>
<div class="c r" style="top:216px;left:954px;width:71px">0.242349</div>
<div class="c" style="top:216px;left:1028px;width:111px">-12.31 dBTP</div>
<div class="c" style="top:233px;left:38px;width:296px">03.final phase.flac</div>
<div class="c" style="top:233px;left:336px;width:75px">-4.85 LUFS</div>
<div class="c" style="top:233px;left:413px;width:61px">2.89 dB</div>
<div class="c r" style="top:233px;left:475px;width:71px">1.076115</div>
<div class="c" style="top:233px;left:549px;width:111px">0.64 dBTP</div>
<div class="c" style="top:233px;left:662px;width:82px">-18.00 LUFS</div>
<div class="c" style="top:233px;left:746px;width:57px">N</div>
<div class="c" style="top:233px;left:805px;width:81px">N</div>
<div class="c" style="top:233px;left:888px;width:65px">-13.15 dB</div>
<div class="c r" style="top:233px;left:954px;width:71px">0.236922</div>
<div class="c" style="top:233px;left:1028px;width:111px">-12.51 dBTP</div>
<div class="c" style="top:250px;left:38px;width:296px">04.BLACKFOX.flac</div>
<div class="c" style="top:250px;left:336px;width:75px">-4.77 LUFS</div>
<div class="c" style="top:250px;left:413px;width:61px">3.94 dB</div>
<div class="c r" style="top:250px;left:475px;width:71px">1.06391</div>
<div class="c" style="top:250px;left:549px;width:111px">0.54 dBTP</div>
<div class="c" style="top:250px;left:662px;width:82px">-18.00 LUFS</div>
<div class="c" style="top:250px;left:746px;width:57px">N</div>
<div class="c" style="top:250px;left:805px;width:81px">N</div>
<div class="c" style="top:250px;left:888px;width:65px">-13.23 dB</div>
<div class="c r" style="top:250px;left:954px;width:71px">0.231837</div>
<div class="c" style="top:250px;left:1028px;width:111px">-12.70 dBTP</div>
<div class="c" style="top:267px;left:38px;width:296px">05.when chance strikes.flac</div>
<div class="c" style="top:267px;left:336px;width:75px">-6.47 LUFS</div>
<div class="c" style="top:267px;left:413px;width:61px">2.82 dB</div>
<div class="c r" style="top:267px;left:475px;width:71px">1.101115</div>
<div class="c" style="top:267px;left:549px;width:111px">0.84 dBTP</div>
<div class="c" style="top:267px;left:662px;width:82px">-18.00 LUFS</div>
<div class="c" style="top:267px;left:746px;width:57px">N</div>
<div class="c" style="top:267px;left:805px;width:81px">N</div>
<div class="c" style="top:267px;left:888px;width:65px">-11.53 dB</div>
<div class="c r" style="top:267px;left:954px;width:71px">0.292104</div>
<div class="c" style="top:267px;left:1028px;width:111px">-10.69 dBTP</div>
<div class="c" style="top:284px;left:38px;width:296px">06.Love with You.flac</div>
<div class="c" style="top:284px;left:336px;width:75px">-5.80 LUFS</div>
<div class="c" style="top:284px;left:413px;width:61px">2.95 dB</div>
<div class="c r" style="top:284px;left:475px;width:71px">1.120597</div>
<div class="c" style="top:284px;left:549px;width:111px">0.99 dBTP</div>
<div class="c" style="top:284px;left:662px;width:82px">-18.00 LUFS</div>
<div class="c" style="top:284px;left:746px;width:57px">N</div>
<div class="c" style="top:284px;left:805px;width:81px">N</div>
<div class="c" style="top:284px;left:888px;width:65px">-12.20 dB</div>
<div class="c r" style="top:284px;left:954px;width:71px">0.275067</div>
<div class="c" style="top:284px;left:1028px;width:111px">-11.21 dBTP</div>
<div class="c" style="top:301px;left:38px;width:296px">07.Edge of the Universe.flac</div>
<div class="c" style="top:301px;left:336px;width:75px">-5.70 LUFS</div>
<div class="c" style="top:301px;left:413px;width:61px">2.90 dB</div>
<div class="c r" style="top:301px;left:475px;width:71px">1.197767</div>
<div class="c" style="top:301px;left:549px;width:111px">1.57 dBTP</div>
<div class="c" style="top:301px;left:662px;width:82px">-18.00 LUFS</div>
<div class="c" style="top:301px;left:746px;width:57px">N</div>
<div class="c" style="top:301px;left:805px;width:81px">N</div>
<div class="c" style="top:301px;left:888px;width:65px">-12.30 dB</div>
<div class="c r" style="top:301px;left:954px;width:71px">0.290602</div>
<div class="c" style="top:301px;left:1028px;width:111px">-10.73 dBTP</div>
<div class="c" style="top:318px;left:38px;width:296px">08.under a starlit sky.flac</div>
<div class="c" style="top:318px;left:336px;width:75px">-5.87 LUFS</div>
<div class="c" style="top:318px;left:413px;width:61px">2.04 dB</div>
<div class="c r" style="top:318px;left:475px;width:71px">1.131236</div>
<div class="c" style="top:318px;left:549px;width:111px">1.07 dBTP</div>
<div class="c" style="top:318px;left:662px;width:82px">-18.00 LUFS</div>
<div class="c" style="top:318px;left:746px;width:57px">N</div>
<div class="c" style="top:318px;left:805px;width:81px">N</div>
<div class="c" style="top:318px;left:888px;width:65px">-12.13 dB</div>
<div class="c r" style="top:318px;left:954px;width:71px">0.280005</div>
<div class="c" style="top:318px;left:1028px;width:111px">-11.06 dBTP</div>
<div class="c" style="top:335px;left:38px;width:296px">09.divine criminal.flac</div>
<div class="c" style="top:335px;left:336px;width:75px">-5.65 LUFS</div>
<div class="c" style="top:335px;left:413px;width:61px">3.46 dB</div>
<div class="c r" style="top:335px;left:475px;width:71px">1.219337</div>
<div class="c" style="top:335px;left:549px;width:111px">1.72 dBTP</div>
<div class="c" style="top:335px;left:662px;width:82px">-18.00 LUFS</div>
<div class="c" style="top:335px;left:746px;width:57px">N</div>
<div class="c" style="top:335px;left:805px;width:81px">N</div>
<div class="c" style="top:335px;left:888px;width:65px">-12.35 dB</div>
<div class="c r" style="top:335px;left:954px;width:71px">0.29415</div>
<div class="c" style="top:335px;left:1028px;width:111px">-10.63 dBTP</div>
<div class="c" style="top:352px;left:38px;width:296px">10.killing bites.flac</div>
<div class="c" style="top:352px;left:336px;width:75px">-5.45 LUFS</div>
<div class="c" style="top:352px;left:413px;width:61px">1.95 dB</div>
<div class="c r" style="top:352px;left:475px;width:71px">1.161245</div>
<div class="c" style="top:352px;left:549px;width:111px">1.30 dBTP</div>
<div class="c" style="top:352px;left:662px;width:82px">-18.00 LUFS</div>
<div class="c" style="top:352px;left:746px;width:57px">N</div>
<div class="c" style="top:352px;left:805px;width:81px">N</div>
<div class="c" style="top:352px;left:888px;width:65px">-12.55 dB</div>
<div class="c r" style="top:352px;left:954px;width:71px">0.273816</div>
<div class="c" style="top:352px;left:1028px;width:111px">-11.25 dBTP</div>
<div class="c" style="top:369px;left:38px;width:296px">11.crossroads.flac</div>
<div class="c" style="top:369px;left:336px;width:75px">-6.26 LUFS</div>
<div class="c" style="top:369px;left:413px;width:61px">12.52 dB</div>
<div class="c r" style="top:369px;left:475px;width:71px">1.154105</div>
<div class="c" style="top:369px;left:549px;width:111px">1.24 dBTP</div>
<div class="c" style="top:369px;left:662px;width:82px">-18.00 LUFS</div>
<div class="c" style="top:369px;left:746px;width:57px">N</div>
<div class="c" style="top:369px;left:805px;width:81px">N</div>
<div class="c" style="top:369px;left:888px;width:65px">-11.74 dB</div>
<div class="c r" style="top:369px;left:954px;width:71px">0.298631</div>
<div class="c" style="top:369px;left:1028px;width:111px">-10.50 dBTP</div>
<div class="c" style="top:386px;left:38px;width:296px">12.sky -crossroads version-.flac</div>
<div class="c" style="top:386px;left:336px;width:75px">-6.52 LUFS</div>
<div class="c" style="top:386px;left:413px;width:61px">5.44 dB</div>
<div class="c r" style="top:386px;left:475px;width:71px">1.033227</div>
<div class="c" style="top:386px;left:549px;width:111px">0.28 dBTP</div>
<div class="c" style="top:386px;left:662px;width:82px">-18.00 LUFS</div>
<div class="c" style="top:386px;left:746px;width:57px">N</div>
<div class="c" style="top:386px;left:805px;width:81px">N</div>
<div class="c" style="top:386px;left:888px;width:65px">-11.48 dB</div>
<div class="c r" style="top:386px;left:954px;width:71px">0.275399</div>
<div class="c" style="top:386px;left:1028px;width:111px">-11.20 dBTP</div>
<div class="c" style="top:403px;left:38px;width:296px">13.clockwork planet.flac</div>
<div class="c" style="top:403px;left:336px;width:75px">-4.84 LUFS</div>
<div class="c" style="top:403px;left:413px;width:61px">3.48 dB</div>
<div class="c r" style="top:403px;left:475px;width:71px">1.101112</div>
<div class="c" style="top:403px;left:549px;width:111px">0.84 dBTP</div>
<div class="c" style="top:403px;left:662px;width:82px">-18.00 LUFS</div>
<div class="c" style="top:403px;left:746px;width:57px">N</div>
<div class="c" style="top:403px;left:805px;width:81px">N</div>
<div class="c" style="top:403px;left:888px;width:65px">-13.16 dB</div>
<div class="c r" style="top:403px;left:954px;width:71px">0.242051</div>
<div class="c" style="top:403px;left:1028px;width:111px">-12.32 dBTP</div>
<div class="c" style="top:420px;left:38px;width:296px">14.The end of escape -fripSide edition-.flac</div>
<div class="c" style="top:420px;left:336px;width:75px">-5.89 LUFS</div>
<div class="c" style="top:420px;left:413px;width:61px">2.43 dB</div>
<div class="c r" style="top:420px;left:475px;width:71px">1.277471</div>
<div class="c" style="top:420px;left:549px;width:111px">2.13 dBTP</div>
<div class="c" style="top:420px;left:662px;width:82px">-18.00 LUFS</div>
<div class="c" style="top:420px;left:746px;width:57px">N</div>
<div class="c" style="top:420px;left:805px;width:81px">N</div>
<div class="c" style="top:420px;left:888px;width:65px">-12.11 dB</div>
<div class="c r" style="top:420px;left:954px;width:71px">0.316805</div>
<div class="c" style="top:420px;left:1028px;width:111px">-9.98 dBTP</div>
<div class="c" style="top:437px;left:38px;width:296px">15.white forces —IS3 edition—.flac</div>
<div class="c" style="top:437px;left:336px;width:75px">-6.85 LUFS</div>
<div class="c" style="top:437px;left:413px;width:61px">9.52 dB</div>
<div class="c r" style="top:437px;left:475px;width:71px">1.182672</div>
<div class="c" style="top:437px;left:549px;width:111px">1.46 dBTP</div>
<div class="c" style="top:437px;left:662px;width:82px">-18.00 LUFS</div>
<div class="c" style="top:437px;left:746px;width:57px">N</div>
<div class="c" style="top:437px;left:805px;width:81px">N</div>
<div class="c" style="top:437px;left:888px;width:65px">-11.15 dB</div>
<div class="c r" style="top:437px;left:954px;width:71px">0.327434</div>
<div class="c" style="top:437px;left:1028px;width:111px">-9.70 dBTP</div>
<div class="c" style="top:454px;left:38px;width:296px">16.1983—schwarzesmarken—(IS3 version).flac</div>
<div class="c" style="top:454px;left:336px;width:75px">-6.56 LUFS</div>
<div class="c" style="top:454px;left:413px;width:61px">5.07 dB</div>
<div class="c r" style="top:454px;left:475px;width:71px">1.223398</div>
<div class="c" style="top:454px;left:549px;width:111px">1.75 dBTP</div>
<div class="c" style="top:454px;left:662px;width:82px">-18.00 LUFS</div>
<div class="c" style="top:454px;left:746px;width:57px">N</div>
<div class="c" style="top:454px;left:805px;width:81px">N</div>
<div class="c" style="top:454px;left:888px;width:65px">-11.44 dB</div>
<div class="c r" style="top:454px;left:954px;width:71px">0.327718</div>
<div class="c" style="top:454px;left:1028px;width:111px">-9.69 dBTP</div>
<div class="c" style="top:471px;left:38px;width:296px">17.Two souls —toward the truth—.flac</div>
<div class="c" style="top:471px;left:336px;width:75px">-5.53 LUFS</div>
<div class="c" style="top:471px;left:413px;width:61px">5.44 dB</div>
<div class="c r" style="top:471px;left:475px;width:71px">1.061595</div>
<div class="c" style="top:471px;left:549px;width:111px">0.52 dBTP</div>
<div class="c" style="top:471px;left:662px;width:82px">-18.00 LUFS</div>
<div class="c" style="top:471px;left:746px;width:57px">N</div>
<div class="c" style="top:471px;left:805px;width:81px">N</div>
<div class="c" style="top:471px;left:888px;width:65px">-12.47 dB</div>
<div class="c r" style="top:471px;left:954px;width:71px">0.252521</div>
<div class="c" style="top:471px;left:1028px;width:111px">-11.95 dBTP</div>
<div class="c" style="top:488px;left:38px;width:296px">18.magicaride —version2016—.flac</div>
<div class="c" style="top:488px;left:336px;width:75px">-5.41 LUFS</div>
<div class="c" style="top:488px;left:413px;width:61px">4.60 dB</div>
<div class="c r" style="top:488px;left:475px;width:71px">1.180635</div>
<div class="c" style="top:488px;left:549px;width:111px">1.44 dBTP</div>
<div class="c" style="top:488px;left:662px;width:82px">-18.00 LUFS</div>
<div class="c" style="top:488px;left:746px;width:57px">N</div>
<div class="c" style="top:488px;left:805px;width:81px">N</div>
<div class="c" style="top:488px;left:888px;width:65px">-12.59 dB</div>
<div class="c r" style="top:488px;left:954px;width:71px">0.277133</div>
<div class="c" style="top:488px;left:1028px;width:111px">-11.15 dBTP</div>
<div class="c" style="top:505px;left:38px;width:296px">19.Luminize.flac</div>
<div class="c" style="top:505px;left:336px;width:75px">-5.38 LUFS</div>
<div class="c" style="top:505px;left:413px;width:61px">3.29 dB</div>
<div class="c r" style="top:505px;left:475px;width:71px">1.055682</div>
<div class="c" style="top:505px;left:549px;width:111px">0.47 dBTP</div>
<div class="c" style="top:505px;left:662px;width:82px">-18.00 LUFS</div>
<div class="c" style="top:505px;left:746px;width:57px">N</div>
<div class="c" style="top:505px;left:805px;width:81px">N</div>
<div class="c" style="top:505px;left:888px;width:65px">-12.62 dB</div>
<div class="c r" style="top:505px;left:954px;width:71px">0.24677</div>
<div class="c" style="top:505px;left:1028px;width:111px">-12.15 dBTP</div>
<div class="c" style="top:522px;left:38px;width:296px">20.infinite synthesis.flac</div>
<div class="c" style="top:522px;left:336px;width:75px">-6.51 LUFS</div>
<div class="c" style="top:522px;left:413px;width:61px">8.80 dB</div>
<div class="c r" style="top:522px;left:475px;width:71px">1.225343</div>
<div class="c" style="top:522px;left:549px;width:111px">1.77 dBTP</div>
<div class="c" style="top:522px;left:662px;width:82px">-18.00 LUFS</div>
<div class="c" style="top:522px;left:746px;width:57px">N</div>
<div class="c" style="top:522px;left:805px;width:81px">N</div>
<div class="c" style="top:522px;left:888px;width:65px">-11.49 dB</div>
<div class="c r" style="top:522px;left:954px;width:71px">0.326391</div>
<div class="c" style="top:522px;left:1028px;width:111px">-9.73 dBTP</div>
<div class="c" style="top:539px;left:38px;width:296px">21.black bullet.flac</div>
<div class="c" style="top:539px;left:336px;width:75px">-5.97 LUFS</div>
<div class="c" style="top:539px;left:413px;width:61px">5.06 dB</div>
<div class="c r" style="top:539px;left:475px;width:71px">1.168205</div>
<div class="c" style="top:539px;left:549px;width:111px">1.35 dBTP</div>
<div class="c" style="top:539px;left:662px;width:82px">-18.00 LUFS</div>
<div class="c" style="top:539px;left:746px;width:57px">N</div>
<div class="c" style="top:539px;left:805px;width:81px">N</div>
<div class="c" style="top:539px;left:888px;width:65px">-12.03 dB</div>
<div class="c r" style="top:539px;left:954px;width:71px">0.292352</div>
<div class="c" style="top:539px;left:1028px;width:111px">-10.68 dBTP</div>
<div class="c" style="top:556px;left:38px;width:296px">22.eternal reality.flac</div>
<div class="c" style="top:556px;left:336px;width:75px">-5.39 LUFS</div>
<div class="c" style="top:556px;left:413px;width:61px">4.13 dB</div>
<div class="c r" style="top:556px;left:475px;width:71px">1.211869</div>
<div class="c" style="top:556px;left:549px;width:111px">1.67 dBTP</div>
<div class="c" style="top:556px;left:662px;width:82px">-18.00 LUFS</div>
<div class="c" style="top:556px;left:746px;width:57px">N</div>
<div class="c" style="top:556px;left:805px;width:81px">N</div>
<div class="c" style="top:556px;left:888px;width:65px">-12.61 dB</div>
<div class="c r" style="top:556px;left:954px;width:71px">0.283912</div>
<div class="c" style="top:556px;left:1028px;width:111px">-10.94 dBTP</div>
<div class="c" style="top:573px;left:38px;width:296px">23.sister&#39;s noise.flac</div>
<div class="c" style="top:573px;left:336px;width:75px">-5.47 LUFS</div>
<div class="c" style="top:573px;left:413px;width:61px">4.56 dB</div>
<div class="c r" style="top:573px;left:475px;width:71px">1.086992</div>
<div class="c" style="top:573px;left:549px;width:111px">0.72 dBTP</div>
<div class="c" style="top:573px;left:662px;width:82px">-18.00 LUFS</div>
<div class="c" style="top:573px;left:746px;width:57px">N</div>
<div class="c" style="top:573px;left:805px;width:81px">N</div>
<div class="c" style="top:573px;left:888px;width:65px">-12.53 dB</div>
<div class="c r" style="top:573px;left:954px;width:71px">0.256959</div>
<div class="c" style="top:573px;left:1028px;width:111px">-11.80 dBTP</div>
<div class="c" style="top:590px;left:38px;width:296px">24.Decade.flac</div>
<div class="c" style="top:590px;left:336px;width:75px">-6.35 LUFS</div>
<div class="c" style="top:590px;left:413px;width:61px">6.07 dB</div>
<div class="c r" style="top:590px;left:475px;width:71px">1.267436</div>
<div class="c" style="top:590px;left:549px;width:111px">2.06 dBTP</div>
<div class="c" style="top:590px;left:662px;width:82px">-18.00 LUFS</div>
<div class="c" style="top:590px;left:746px;width:57px">N</div>
<div class="c" style="top:590px;left:805px;width:81px">N</div>
<div class="c" style="top:590px;left:888px;width:65px">-11.65 dB</div>
<div class="c r" style="top:590px;left:954px;width:71px">0.331493</div>
<div class="c" style="top:590px;left:1028px;width:111px">-9.59 dBTP</div>
<div class="c" style="top:607px;left:38px;width:296px">25.Hesitation Snow.flac</div>
<div class="c" style="top:607px;left:336px;width:75px">-7.53 LUFS</div>
<div class="c" style="top:607px;left:413px;width:61px">8.85 dB</div>
<div class="c r" style="top:607px;left:475px;width:71px">1.223001</div>
<div class="c" style="top:607px;left:549px;width:111px">1.75 dBTP</div>
<div class="c" style="top:607px;left:662px;width:82px">-18.00 LUFS</div>
<div class="c" style="top:607px;left:746px;width:57px">N</div>
<div class="c" style="top:607px;left:805px;width:81px">N</div>
<div class="c" style="top:607px;left:888px;width:65px">-10.47 dB</div>
<div class="c r" style="top:607px;left:954px;width:71px">0.366368</div>
<div class="c" style="top:607px;left:1028px;width:111px">-8.72 dBTP</div>
<div class="c" style="top:624px;left:38px;width:296px">26.way to answer.flac</div>
<div class="c" style="top:624px;left:336px;width:75px">-5.29 LUFS</div>
<div class="c" style="top:624px;left:413px;width:61px">3.59 dB</div>
<div class="c r" style="top:624px;left:475px;width:71px">1.284514</div>
<div class="c" style="top:624px;left:549px;width:111px">2.17 dBTP</div>
<div class="c" style="top:624px;left:662px;width:82px">-18.00 LUFS</div>
<div class="c" style="top:624px;left:746px;width:57px">N</div>
<div class="c" style="top:624px;left:805px;width:81px">N</div>
<div class="c" style="top:624px;left:888px;width:65px">-12.71 dB</div>
<div class="c r" style="top:624px;left:954px;width:71px">0.297332</div>
<div class="c" style="top:624px;left:1028px;width:111px">-10.54 dBTP</div>
<div class="c" style="top:641px;left:38px;width:296px">27.Heaven is a Place On Earth.flac</div>
<div class="c" style="top:641px;left:336px;width:75px">-6.58 LUFS</div>
<div class="c" style="top:641px;left:413px;width:61px">9.68 dB</div>
<div class="c r" style="top:641px;left:475px;width:71px">1.198539</div>
<div class="c" style="top:641px;left:549px;width:111px">1.57 dBTP</div>
<div class="c" style="top:641px;left:662px;width:82px">-18.00 LUFS</div>
<div class="c" style="top:641px;left:746px;width:57px">N</div>
<div class="c" style="top:641px;left:805px;width:81px">N</div>
<div class="c" style="top:641px;left:888px;width:65px">-11.42 dB</div>
<div class="c r" style="top:641px;left:954px;width:71px">0.321841</div>
<div class="c" style="top:641px;left:1028px;width:111px">-9.85 dBTP</div>
<div class="c" style="top:658px;left:38px;width:296px">28.future gazer.flac</div>
<div class="c" style="top:658px;left:336px;width:75px">-5.32 LUFS</div>
<div class="c" style="top:658px;left:413px;width:61px">5.85 dB</div>
<div class="c r" style="top:658px;left:475px;width:71px">1.165273</div>
<div class="c" style="top:658px;left:549px;width:111px">1.33 dBTP</div>
<div class="c" style="top:658px;left:662px;width:82px">-18.00 LUFS</div>
<div class="c" style="top:658px;left:746px;width:57px">N</div>
<div class="c" style="top:658px;left:805px;width:81px">N</div>
<div class="c" style="top:658px;left:888px;width:65px">-12.68 dB</div>
<div class="c r" style="top:658px;left:954px;width:71px">0.270651</div>
<div class="c" style="top:658px;left:1028px;width:111px">-11.35 dBTP</div>
<div class="c" style="top:675px;left:38px;width:296px">29.LEVEL5-judgelight-.flac</div>
<div class="c" style="top:675px;left:336px;width:75px">-4.96 LUFS</div>
<div class="c" style="top:675px;left:413px;width:61px">5.28 dB</div>
<div class="c r" style="top:675px;left:475px;width:71px">1.054236</div>
<div class="c" style="top:675px;left:549px;width:111px">0.46 dBTP</div>
<div class="c" style="top:675px;left:662px;width:82px">-18.00 LUFS</div>
<div class="c" style="top:675px;left:746px;width:57px">N</div>
<div class="c" style="top:675px;left:805px;width:81px">N</div>
<div class="c" style="top:675px;left:888px;width:65px">-13.04 dB</div>
<div class="c r" style="top:675px;left:954px;width:71px">0.23492</div>
<div class="c" style="top:675px;left:1028px;width:111px">-12.58 dBTP</div>
<div class="c" style="top:692px;left:38px;width:296px">30.only my railgun.flac</div>
<div class="c" style="top:692px;left:336px;width:75px">-5.00 LUFS</div>
<div class="c" style="top:692px;left:413px;width:61px">6.00 dB</div>
<div class="c r" style="top:692px;left:475px;width:71px">1.270945</div>
<div class="c" style="top:692px;left:549px;width:111px">2.08 dBTP</div>
<div class="c" style="top:692px;left:662px;width:82px">-18.00 LUFS</div>
<div class="c" style="top:692px;left:746px;width:57px">N</div>
<div class="c" style="top:692px;left:805px;width:81px">N</div>
<div class="c" style="top:692px;left:888px;width:65px">-13.00 dB</div>
<div class="c r" style="top:692px;left:954px;width:71px">0.284462</div>
<div class="c" style="top:692px;left:1028px;width:111px">-10.92 dBTP</div>
<div class="c" style="top:709px;left:38px;width:296px">Album</div>
<div class="c" style="top:709px;left:336px;width:75px">-5.73 LUFS</div>
<div class="c" style="top:709px;left:413px;width:61px">5.65 dB</div>
<div class="c r" style="top:709px;left:475px;width:71px">1.284514</div>
<div class="c" style="top:709px;left:549px;width:111px">2.17 dBTP</div>
<div class="c" style="top:709px;left:662px;width:82px">-18.00 LUFS</div>
<div class="c" style="top:709px;left:746px;width:57px">N</div>
<div class="c" style="top:709px;left:805px;width:81px">N</div>
<div class="c" style="top:709px;left:888px;width:65px">-12.27 dB</div>
<div class="c r" style="top:709px;left:954px;width:71px">0.312669</div>
<div class="c" style="top:709px;left:1028px;width:111px">-10.10 dBTP</div>
<div class="abs" style="left:37px;top:182px;width:1px;height:17px;background:#000"></div>
<div class="abs" style="left:37px;top:182px;width:298px;height:1px;background:#000"></div>
<div class="abs" style="left:333px;top:182px;width:2px;height:17px;background:#000"></div>
<div class="abs" style="left:37px;top:197px;width:298px;height:2px;background:#000"></div>
<div class="abs" style="left:332px;top:196px;width:5px;height:5px;background:#000"></div>
<!-- bottom area bg -->
<div class="abs" style="left:0;top:764px;width:1166px;height:44px;background:#2a2e32"></div>
<div class="abs" style="left:0;top:764px;width:37px;height:1px;background:#3a3e42"></div>
<!-- horizontal scrollbar track -->
<div class="abs" style="left:5px;top:770px;width:1135px;height:10px;background:#43474b;border:1px solid #595d61;border-radius:5px"></div>
<div class="abs" style="left:5px;top:770px;width:520px;height:10px;background:#4e5256;border:1px solid #8b8e91;border-radius:5px"></div>
<div class="abs" style="left:1140px;top:764px;width:5px;height:21px;background:#7b7e82"></div>
<div class="abs" style="left:1142px;top:769px;width:1px;height:11px;background:#000"></div>
<!-- sheet nav -->
<svg style="left:0;top:0" width="200" height="831">
<g fill="#7b7e82">
<rect x="14" y="789" width="2" height="15"/>
<path d="M23 790 V804 L16 797 Z"/>
<path d="M45 790 V804 L37 797 Z"/>
<path d="M59 790 V804 L67 797 Z"/>
<path d="M81 790 V804 L89 797 Z"/>
<rect x="89" y="789" width="2" height="15"/>
</g>
<path d="M108 797.5 H123 M115.5 790 V805" stroke="#fcfcfc" stroke-width="3"/>
</svg>
<div class="abs" style="left:133px;top:785px;width:58px;height:20px;background:#1b1e20"></div>
<div class="abs" style="left:133px;top:805px;width:58px;height:3px;background:#fcfcfc"></div>
<div class="t" style="left:133px;top:788px;width:58px;text-align:center;font-size:11.5px">test-1</div>
<!-- vertical scrollbar -->
<div class="abs" style="left:1145px;top:162px;width:21px;height:646px;background:#2a2e32"></div>
<div class="abs" style="left:1145px;top:162px;width:21px;height:5px;background:#7b7e82"></div>
<div class="abs" style="left:1150px;top:164px;width:11px;height:1px;background:#000"></div>
<div class="abs" style="left:1151px;top:171px;width:11px;height:588px;background:#43474b;border:1px solid #595d61;border-radius:0 0 6px 6px"></div>
<div class="abs" style="left:1151px;top:171px;width:11px;height:286px;background:#2d6a91;border:1px solid #3daee9;border-radius:6px"></div>
<!-- sidebar -->
<div class="abs" style="left:1166px;top:127px;width:1px;height:681px;background:#6a6e72"></div>
<div class="abs" style="left:1167px;top:431px;width:7px;height:73px;background:#fcfcfc"></div>
<svg style="left:0;top:0" width="1174" height="831"><path d="M1167.5 467 L1171.5 464 V470 Z" fill="#232629"/></svg>
<!-- status bar -->
<div class="abs" style="left:0;top:808px;width:1174px;height:1px;background:#53575b"></div>
<div class="abs" style="left:0;top:809px;width:1174px;height:22px;background:#2a2e32"></div>
<div class="t" style="left:11px;top:813px;font-size:12px">Sheet 1 of 1</div>
<div class="t" style="left:357px;top:813px;font-size:12.5px">Default</div>
<div class="t" style="left:481px;top:813px;font-size:12px">English (UK)</div>
<div class="t" style="left:814px;top:813px;font-size:12px">Average: ; Sum: 0</div>
<div class="t" style="left:1135px;top:813px;font-size:11.5px">100%</div>
<svg style="left:0;top:0" width="1174" height="831">
<path d="M656 815.5 H663 M659.5 815.5 V825.5 M656 825.5 H663 M665 823 V825.5 H670 V823" fill="none" stroke="#bdbdbd" stroke-width="1.4"/>
<path d="M686.6 815.6 H696 L698.4 818 V826.4 H686.6 Z" fill="#b4505f"/>
<rect x="689" y="816" width="6" height="3" fill="#2a2e32"/>
<rect x="689.5" y="821.5" width="6" height="3.5" fill="#2a2e32"/>
<path d="M992 821.5 H1000 M1111 821.5 H1119 M1115 817.5 V825.5" stroke="#9a9a9a" stroke-width="1.5"/>
<rect x="1007" y="820.5" width="98" height="2" fill="#eff0f1"/>
<circle cx="1055.5" cy="821.5" r="4.3" fill="#d6d6d6"/>
</svg>

</body></html>
